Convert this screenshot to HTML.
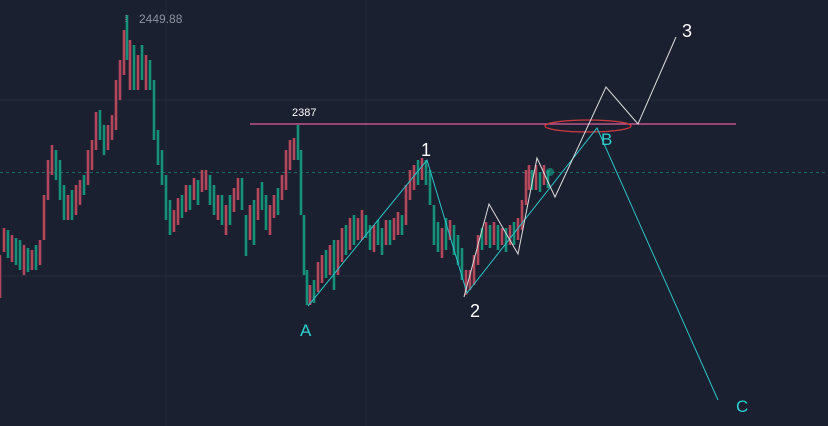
<!DOCTYPE html>
<html><head><meta charset="utf-8"><style>
html,body{margin:0;padding:0;background:#1b2030;overflow:hidden}
svg{display:block}
text{font-family:"Liberation Sans","DejaVu Sans",sans-serif}
</style></head><body>
<svg width="828" height="426" viewBox="0 0 828 426" xmlns="http://www.w3.org/2000/svg">
<rect width="828" height="426" fill="#1b2030"/>
<line x1="0" y1="100" x2="828" y2="100" stroke="#262c3c" stroke-width="1"/>
<line x1="0" y1="276" x2="828" y2="276" stroke="#262c3c" stroke-width="1"/>
<line x1="166" y1="0" x2="166" y2="426" stroke="#232938" stroke-width="1"/>
<line x1="366" y1="0" x2="366" y2="426" stroke="#232938" stroke-width="1"/>
<line x1="0" y1="172.5" x2="828" y2="172.5" stroke="#1f6b62" stroke-width="1" stroke-dasharray="3,3"/>
<path fill="none" stroke="#b5475a" stroke-width="2.6" d="M0 255V298M4 228V252M12 235V262M24 245V275M32 250V270M40 240V265M44 195V240M48 160V200M52 145V175M68 195V220M76 185V215M80 180V205M88 150V185M92 140V170M96 112V150M108 125V150M112 115V140M116 80V130M120 60V100M124 30V75M130 40V90M138 55V90M146 55V90M174 210V232M178 198V225M186 185V212M194 178V200M202 170V192M206 170V190M218 195V220M226 205V235M234 188V212M238 178V200M250 205V240M258 188V220M270 205V235M274 195V218M282 175V200M286 150V190M290 140V170M294 138V160M310 285V305M318 262V292M322 255V283M330 245V275M338 240V275M342 228V262M350 218V250M358 218V240M362 210V240M374 225V252M386 220V245M394 218V240M398 212V235M406 185V225M410 170V200M414 165V190M422 158V180M442 228V258M450 220V240M466 270V295M470 270V290M474 255V285M478 235V265M486 222V245M494 222V245M502 228V245M510 225V245M518 218V240M522 200V230M526 170V205M529 165V190M536 165V190M544 165V185"/>
<path fill="none" stroke="#15907a" stroke-width="2.6" d="M8 230V258M16 238V265M20 240V270M28 248V272M36 245V270M56 150V180M60 160V200M64 185V220M72 190V220M84 175V195M100 110V140M104 125V155M127 15V60M134 45V90M142 45V80M150 60V90M154 80V140M158 130V165M162 150V185M166 175V220M170 200V235M182 195V218M190 185V210M198 180V205M210 175V205M214 185V215M222 195V225M230 195V225M242 178V210M246 215V256M254 200V245M262 182V210M266 195V230M278 188V215M298 125V160M301 150V215M304 215V275M307 270V305M314 280V303M326 250V278M334 240V290M346 225V255M354 215V245M366 215V238M370 225V250M378 220V245M382 228V255M390 220V245M402 215V235M418 160V185M426 160V185M430 170V205M434 205V245M438 222V252M446 218V250M454 225V255M458 235V265M462 248V280M482 228V250M490 225V248M498 225V250M506 228V252M514 222V245M532 170V190M540 172V192M548 170V188"/>
<circle cx="550" cy="172" r="4" fill="#18a58c" opacity="0.6"/>
<line x1="250" y1="124" x2="736" y2="124" stroke="#e0609e" stroke-width="1.3"/>
<text x="292" y="116" font-size="11" fill="#ffffff">2387</text>
<line x1="126" y1="15" x2="126" y2="22" stroke="#8a909c" stroke-width="1" stroke-dasharray="1,1"/>
<text x="139" y="23" font-size="12" fill="#8a909c">2449.88</text>
<ellipse cx="588" cy="126" rx="43" ry="6" fill="none" stroke="#d03a40" stroke-width="1.2"/>
<polyline points="308,306 427,160 467,293 597,128 718,400" fill="none" stroke="#2bc4c8" stroke-width="1"/>
<polyline points="464,297 489,204 518,254 537,158 555,197 606,87 638,124 676,37" fill="none" stroke="#dcdcdc" stroke-width="1"/>
<text x="421" y="156" font-size="18" fill="#ffffff">1</text>
<text x="470" y="317" font-size="18" fill="#ffffff">2</text>
<text x="682" y="37" font-size="18" fill="#ffffff">3</text>
<text x="300" y="336" font-size="17" fill="#2bd0d0">A</text>
<text x="601" y="145" font-size="17" fill="#2bd0d0">B</text>
<text x="736" y="412" font-size="17" fill="#2bd0d0">C</text>
</svg>
</body></html>
